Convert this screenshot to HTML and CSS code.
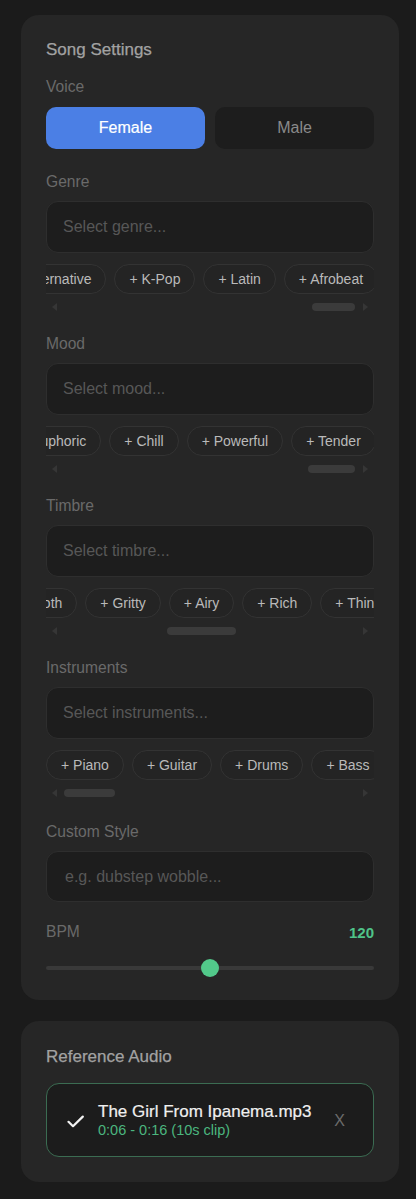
FILE: index.html
```html
<!DOCTYPE html>
<html lang="en">
<head>
<meta charset="utf-8">
<title>Song Settings</title>
<link rel="stylesheet" href="styles.css">
</head>
<body>
<main class="page">
  <section class="card settings">
    <h2 class="card-title">Song Settings</h2>

    <div class="field field-voice">
      <div class="label">Voice</div>
      <div class="toggle">
        <button class="toggle-btn is-active" type="button">Female</button>
        <button class="toggle-btn" type="button">Male</button>
      </div>
    </div>

    <div class="field field-tags">
      <div class="label">Genre</div>
      <input class="text-input" type="text" placeholder="Select genre...">
      <div class="chips">
        <div class="chips-track track-genre">
          <span class="chip">+ Alternative</span>
          <span class="chip">+ K-Pop</span>
          <span class="chip">+ Latin</span>
          <span class="chip">+ Afrobeat</span>
        </div>
      </div>
      <div class="scrollbar">
        <span class="sb-arrow sb-left"></span>
        <div class="sb-track"><div class="sb-thumb thumb-genre"></div></div>
        <span class="sb-arrow sb-right"></span>
      </div>
    </div>

    <div class="field field-tags">
      <div class="label">Mood</div>
      <input class="text-input" type="text" placeholder="Select mood...">
      <div class="chips">
        <div class="chips-track track-mood">
          <span class="chip">+ Euphoric</span>
          <span class="chip">+ Chill</span>
          <span class="chip">+ Powerful</span>
          <span class="chip">+ Tender</span>
        </div>
      </div>
      <div class="scrollbar">
        <span class="sb-arrow sb-left"></span>
        <div class="sb-track"><div class="sb-thumb thumb-mood"></div></div>
        <span class="sb-arrow sb-right"></span>
      </div>
    </div>

    <div class="field field-tags">
      <div class="label">Timbre</div>
      <input class="text-input" type="text" placeholder="Select timbre...">
      <div class="chips">
        <div class="chips-track track-timbre">
          <span class="chip">+ Smooth</span>
          <span class="chip">+ Gritty</span>
          <span class="chip">+ Airy</span>
          <span class="chip">+ Rich</span>
          <span class="chip">+ Thin</span>
          <span class="chip">+ Warm</span>
        </div>
      </div>
      <div class="scrollbar">
        <span class="sb-arrow sb-left"></span>
        <div class="sb-track"><div class="sb-thumb thumb-timbre"></div></div>
        <span class="sb-arrow sb-right"></span>
      </div>
    </div>

    <div class="field field-tags">
      <div class="label">Instruments</div>
      <input class="text-input" type="text" placeholder="Select instruments...">
      <div class="chips">
        <div class="chips-track">
          <span class="chip">+ Piano</span>
          <span class="chip">+ Guitar</span>
          <span class="chip">+ Drums</span>
          <span class="chip">+ Bass</span>
          <span class="chip">+ Strings</span>
        </div>
      </div>
      <div class="scrollbar">
        <span class="sb-arrow sb-left"></span>
        <div class="sb-track"><div class="sb-thumb thumb-instruments"></div></div>
        <span class="sb-arrow sb-right"></span>
      </div>
    </div>

    <div class="field field-custom">
      <div class="label">Custom Style</div>
      <input class="text-input input-custom" type="text" placeholder="e.g. dubstep wobble...">
    </div>

    <div class="field field-bpm">
      <div class="bpm-row">
        <span class="label">BPM</span>
        <span class="bpm-value">120</span>
      </div>
      <input class="range" type="range" min="40" max="200" value="120">
    </div>
  </section>

  <section class="card reference">
    <h2 class="card-title">Reference Audio</h2>
    <div class="audio-box">
      <svg class="check" width="17" height="13" viewBox="0 0 17 13" aria-hidden="true">
        <polyline points="1.5,6.8 6,11.2 15.8,1.6" fill="none" stroke="#f2f2f2" stroke-width="2.2" stroke-linecap="round" stroke-linejoin="round"/>
      </svg>
      <div class="audio-info">
        <div class="audio-name">The Girl From Ipanema.mp3</div>
        <div class="audio-clip">0:06 - 0:16 (10s clip)</div>
      </div>
      <span class="audio-remove">X</span>
    </div>
  </section>
</main>
</body>
</html>
```

FILE: styles.css
```css
* {
  box-sizing: border-box;
}

html, body {
  margin: 0;
  background: #1b1b1b;
}

body {
  font-family: "Liberation Sans", Arial, sans-serif;
  color: #b5b5b5;
}

.page {
  padding: 15px 17px 17px 21px;
  display: flex;
  flex-direction: column;
  gap: 21px;
}

.card {
  background: #262626;
  border-radius: 18px;
  display: flex;
  flex-direction: column;
}

.settings {
  padding: 25px 25px 23px;
}

.reference {
  padding: 26px 25px 25px;
}

.card-title {
  margin: 0;
  font-size: 17px;
  line-height: 20px;
  font-weight: 400;
  color: #a2a2a2;
  -webkit-text-stroke: 0.25px #a2a2a2;
}

.field {
  display: flex;
  flex-direction: column;
}

.field-voice {
  margin-top: 18px;
}

.field-tags {
  margin-top: 24px;
}

.field-custom {
  margin-top: 26px;
}

.field-bpm {
  margin-top: 21px;
}

.label {
  font-size: 15.6px;
  line-height: 18px;
  color: #6a6a6a;
  margin-bottom: 10px;
}

.field-voice .label {
  margin-bottom: 11px;
}

.toggle {
  display: flex;
  gap: 10px;
}

.toggle-btn {
  flex: 1;
  height: 42px;
  border: none;
  border-radius: 10px;
  background: #1d1d1d;
  color: #8a8a8a;
  font-family: inherit;
  font-size: 16px;
  padding: 0;
}

.toggle-btn.is-active {
  background: #4b7fe5;
  color: #ffffff;
  -webkit-text-stroke: 0.2px #ffffff;
}

.text-input {
  display: block;
  width: 100%;
  height: 52px;
  margin: 0;
  padding: 0 16px;
  border: 1px solid #2e2e2e;
  border-radius: 12px;
  background: #1d1d1d;
  font-family: inherit;
  font-size: 16px;
  color: #cfcfcf;
  outline: none;
}

.text-input::placeholder {
  color: #575757;
}

.input-custom {
  height: 51px;
  padding-left: 18px;
}

.chips {
  margin-top: 11px;
  overflow: hidden;
}

.chips-track {
  display: flex;
  gap: 8px;
}

.track-genre {
  margin-left: -47px;
}

.track-mood {
  margin-left: -42px;
}

.track-timbre {
  margin-left: -59px;
}

.chip {
  flex: none;
  height: 30px;
  line-height: 28px;
  padding: 0 14px;
  border: 1px solid #333333;
  border-radius: 15px;
  background: #242424;
  font-size: 14px;
  color: #bababa;
  white-space: nowrap;
}

.scrollbar {
  margin-top: 9px;
  height: 8px;
  display: flex;
  align-items: center;
  padding: 0 6px;
  gap: 5px;
}

.sb-arrow {
  flex: none;
  width: 0;
  height: 0;
  border-top: 4px solid transparent;
  border-bottom: 4px solid transparent;
}

.sb-left {
  border-right: 5px solid #363636;
}

.sb-right {
  border-left: 5px solid #363636;
}

.sb-track {
  flex: 1;
  height: 8px;
  display: flex;
}

.sb-thumb {
  height: 8px;
  border-radius: 4px;
  background: #3b3b3b;
}

.thumb-genre {
  margin-left: 250px;
  width: 43px;
}

.thumb-mood {
  margin-left: 246px;
  width: 47px;
}

.thumb-timbre {
  margin-left: 105px;
  width: 69px;
}

.thumb-instruments {
  margin-left: 2px;
  width: 51px;
}

.bpm-row {
  display: flex;
  justify-content: space-between;
  align-items: center;
  height: 18px;
}

.bpm-row .label {
  margin-bottom: 0;
}

.bpm-value {
  font-size: 15px;
  font-weight: 700;
  color: #4fc389;
}

.range {
  -webkit-appearance: none;
  appearance: none;
  display: block;
  width: 100%;
  height: 18px;
  margin: 18px 0 0;
  background: transparent;
}

.range::-webkit-slider-runnable-track {
  height: 4px;
  border-radius: 2px;
  background: #393939;
}

.range::-webkit-slider-thumb {
  -webkit-appearance: none;
  appearance: none;
  width: 18px;
  height: 18px;
  margin-top: -7px;
  border: none;
  border-radius: 50%;
  background: #52c98a;
}

.audio-box {
  margin-top: 16px;
  height: 74px;
  display: flex;
  align-items: center;
  padding: 0 28px 0 20px;
  border: 1px solid #3b6c52;
  border-radius: 13px;
  background: #1c1c1c;
}

.check {
  flex: none;
  display: block;
  margin-top: 2px;
}

.audio-info {
  flex: 1;
  margin-left: 14px;
  display: flex;
  flex-direction: column;
}

.audio-name {
  font-size: 17px;
  line-height: 20px;
  color: #f0f0f0;
  -webkit-text-stroke: 0.2px #f0f0f0;
}

.audio-clip {
  font-size: 14.5px;
  line-height: 17px;
  color: #4bb67f;
}

.audio-remove {
  flex: none;
  font-size: 16px;
  line-height: 20px;
  color: #6b6b6b;
  margin-top: 2px;
}
```
